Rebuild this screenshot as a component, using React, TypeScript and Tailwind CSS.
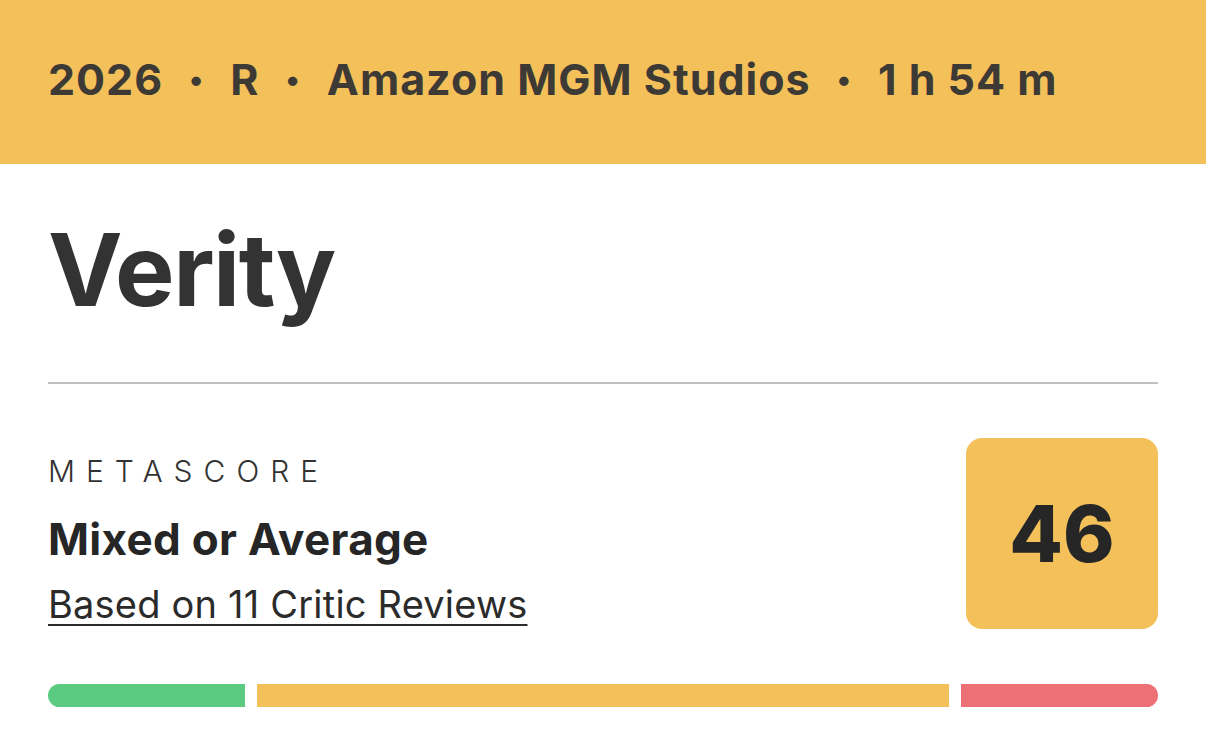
export default function App() {
  const meta = ['2026', 'R', 'Amazon MGM Studios', '1 h 54 m'];

  return (
    <div className="min-h-[742px] bg-white font-['Inter',sans-serif] text-[#333333]">
      <header className="flex h-[164px] items-center bg-[#f4c05a] px-12 pb-[6px]">
        <div className="flex items-center text-[43px] font-bold tracking-[1px] text-[#3d3a35]">
          {meta.map((m, i) => (
            <span key={m} className="flex items-center">
              {i > 0 && <span className="mx-[26px] text-[30px]">•</span>}
              {m}
            </span>
          ))}
        </div>
      </header>

      <main className="px-12">
        <h1 className="pt-[46px] text-[100px] leading-[1.2] font-bold tracking-[-1.5px] text-[#333333]">
          Verity
        </h1>
        <div className="mt-[52px] h-[2px] bg-[#c0c0c0]" />

        <section className="mt-[54px] flex items-start justify-between">
          <div className="pt-[18px]">
            <div className="text-[30px] leading-none font-light tracking-[11px] text-[#333333]">
              METASCORE
            </div>
            <div className="mt-[31px] text-[44px] leading-none font-bold tracking-[0.3px] text-[#262626]">
              Mixed or Average
            </div>
            <a
              href="#"
              className="mt-[24px] block text-[38px] leading-none tracking-[0.2px] text-[#2b2b2b] underline decoration-2 underline-offset-[6px]"
            >
              Based on 11 Critic Reviews
            </a>
          </div>
          <div className="flex h-[191px] w-[192px] items-center justify-center rounded-[16px] bg-[#f4c05a]">
            <span className="text-[78px] leading-none font-extrabold text-[#262626]">46</span>
          </div>
        </section>

        <div className="mt-[55px] grid grid-cols-[197fr_692fr_197fr] gap-3">
          <div className="h-[23px] rounded-l-full bg-[#5bcb82]" />
          <div className="h-[23px] bg-[#f4c05a]" />
          <div className="h-[23px] rounded-r-full bg-[#ee7077]" />
        </div>
      </main>
    </div>
  );
}
